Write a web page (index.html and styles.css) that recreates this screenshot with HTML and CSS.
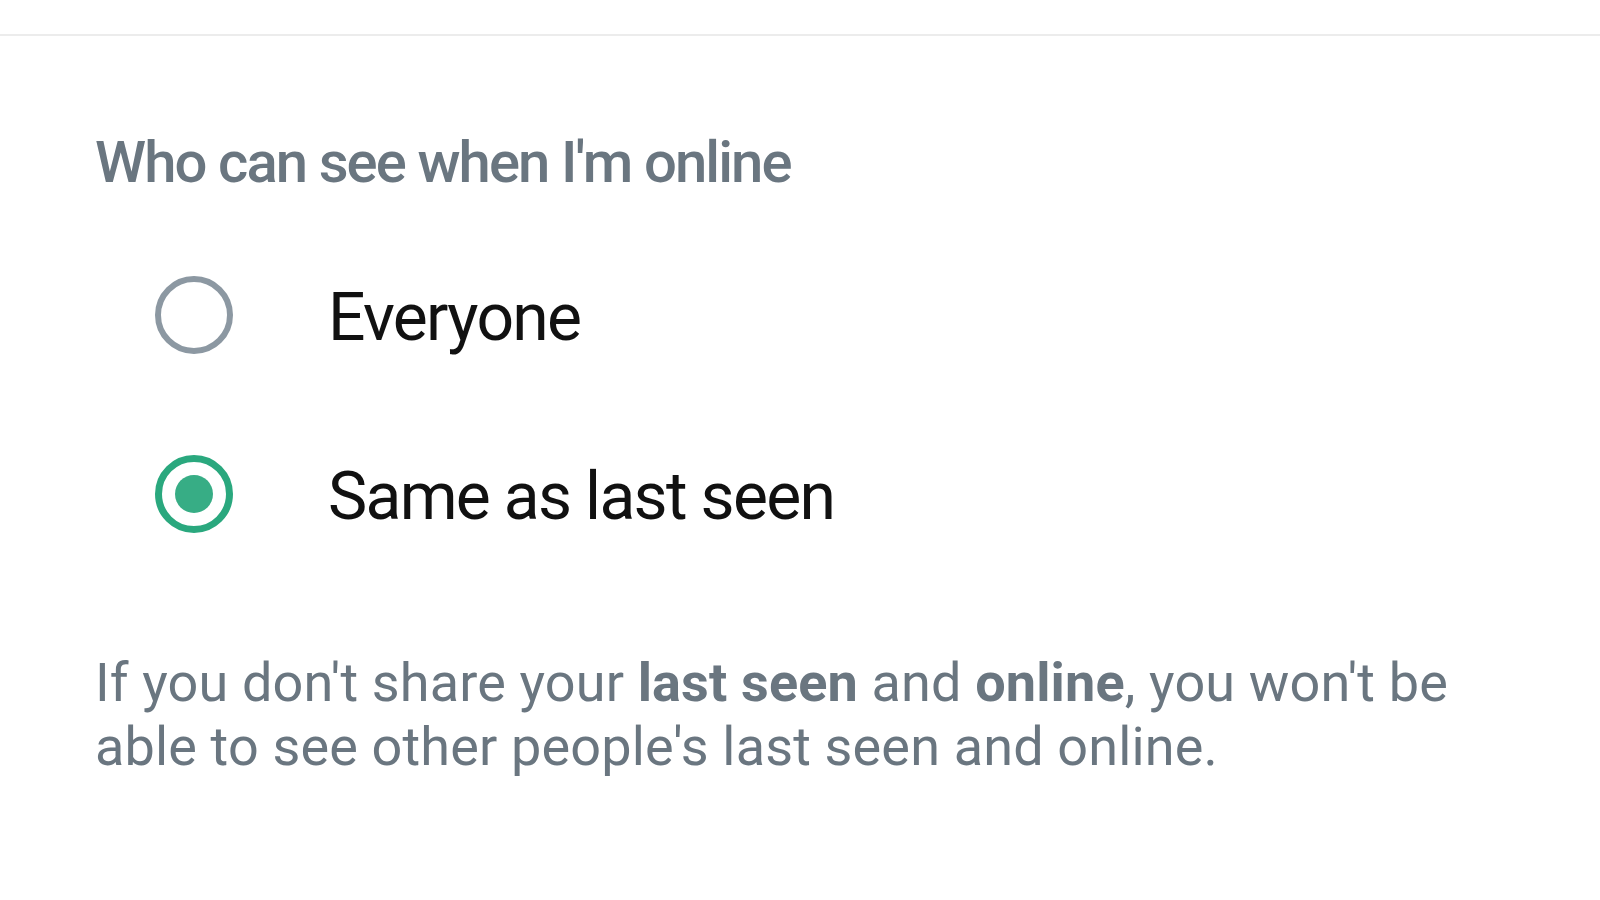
FILE: index.html
```html
<!DOCTYPE html>
<html lang="en">
<head>
<meta charset="UTF-8" />
<meta name="viewport" content="width=device-width, initial-scale=1" />
<title>Online status</title>
<link rel="stylesheet" href="styles.css">
</head>
<body>

<div class="topbar"></div>

<div class="section">
  <h2>Who can see when I'm online</h2>

  <div class="options">
    <label class="option">
      <span class="ring"></span>
      <span class="option-text">Everyone</span>
    </label>
    <label class="option">
      <span class="ring checked"></span>
      <span class="option-text">Same as last seen</span>
    </label>
  </div>

  <p class="note">If you don't share your <b>last seen</b> and <b>online</b>, you won't be able to see other people's last seen and online.</p>
</div>

</body>
</html>
```

FILE: styles.css
```css
body {
  font-family: 'Roboto', 'Noto Sans', sans-serif;
  background: #fff;
  margin: 0;
  color: #111;
}
.topbar {
  height: 34px;
  border-bottom: 2px solid #ececec;
}
.section {
  padding: 91px 0 0 95px;
}
h2 {
  margin: 0;
  font-size: 58px;
  line-height: 70px;
  font-weight: 500;
  letter-spacing: -1.9px;
  color: #6a7680;
}
.options {
  margin-top: 28px;
  padding-left: 60px;
}
.option {
  display: flex;
  align-items: center;
  height: 179px;
}
.ring {
  width: 78px;
  height: 78px;
  box-sizing: border-box;
  border: 6px solid #8c98a2;
  border-radius: 50%;
  display: flex;
  align-items: center;
  justify-content: center;
  flex-shrink: 0;
}
.ring.checked {
  border-width: 7px;
  border-color: #2aa87e;
}
.ring.checked::after {
  content: '';
  width: 38px;
  height: 38px;
  border-radius: 50%;
  background: #37ad85;
}
.option-text {
  margin-left: 95px;
  padding-top: 6px;
  font-size: 66px;
  line-height: 80px;
  letter-spacing: -1.7px;
  color: #111;
}
.note {
  margin: 68px 0 0;
  max-width: 1420px;
  font-size: 54px;
  line-height: 64px;
  letter-spacing: 0.15px;
  color: #6a7680;
}
.note b {
  font-weight: 700;
}
```
